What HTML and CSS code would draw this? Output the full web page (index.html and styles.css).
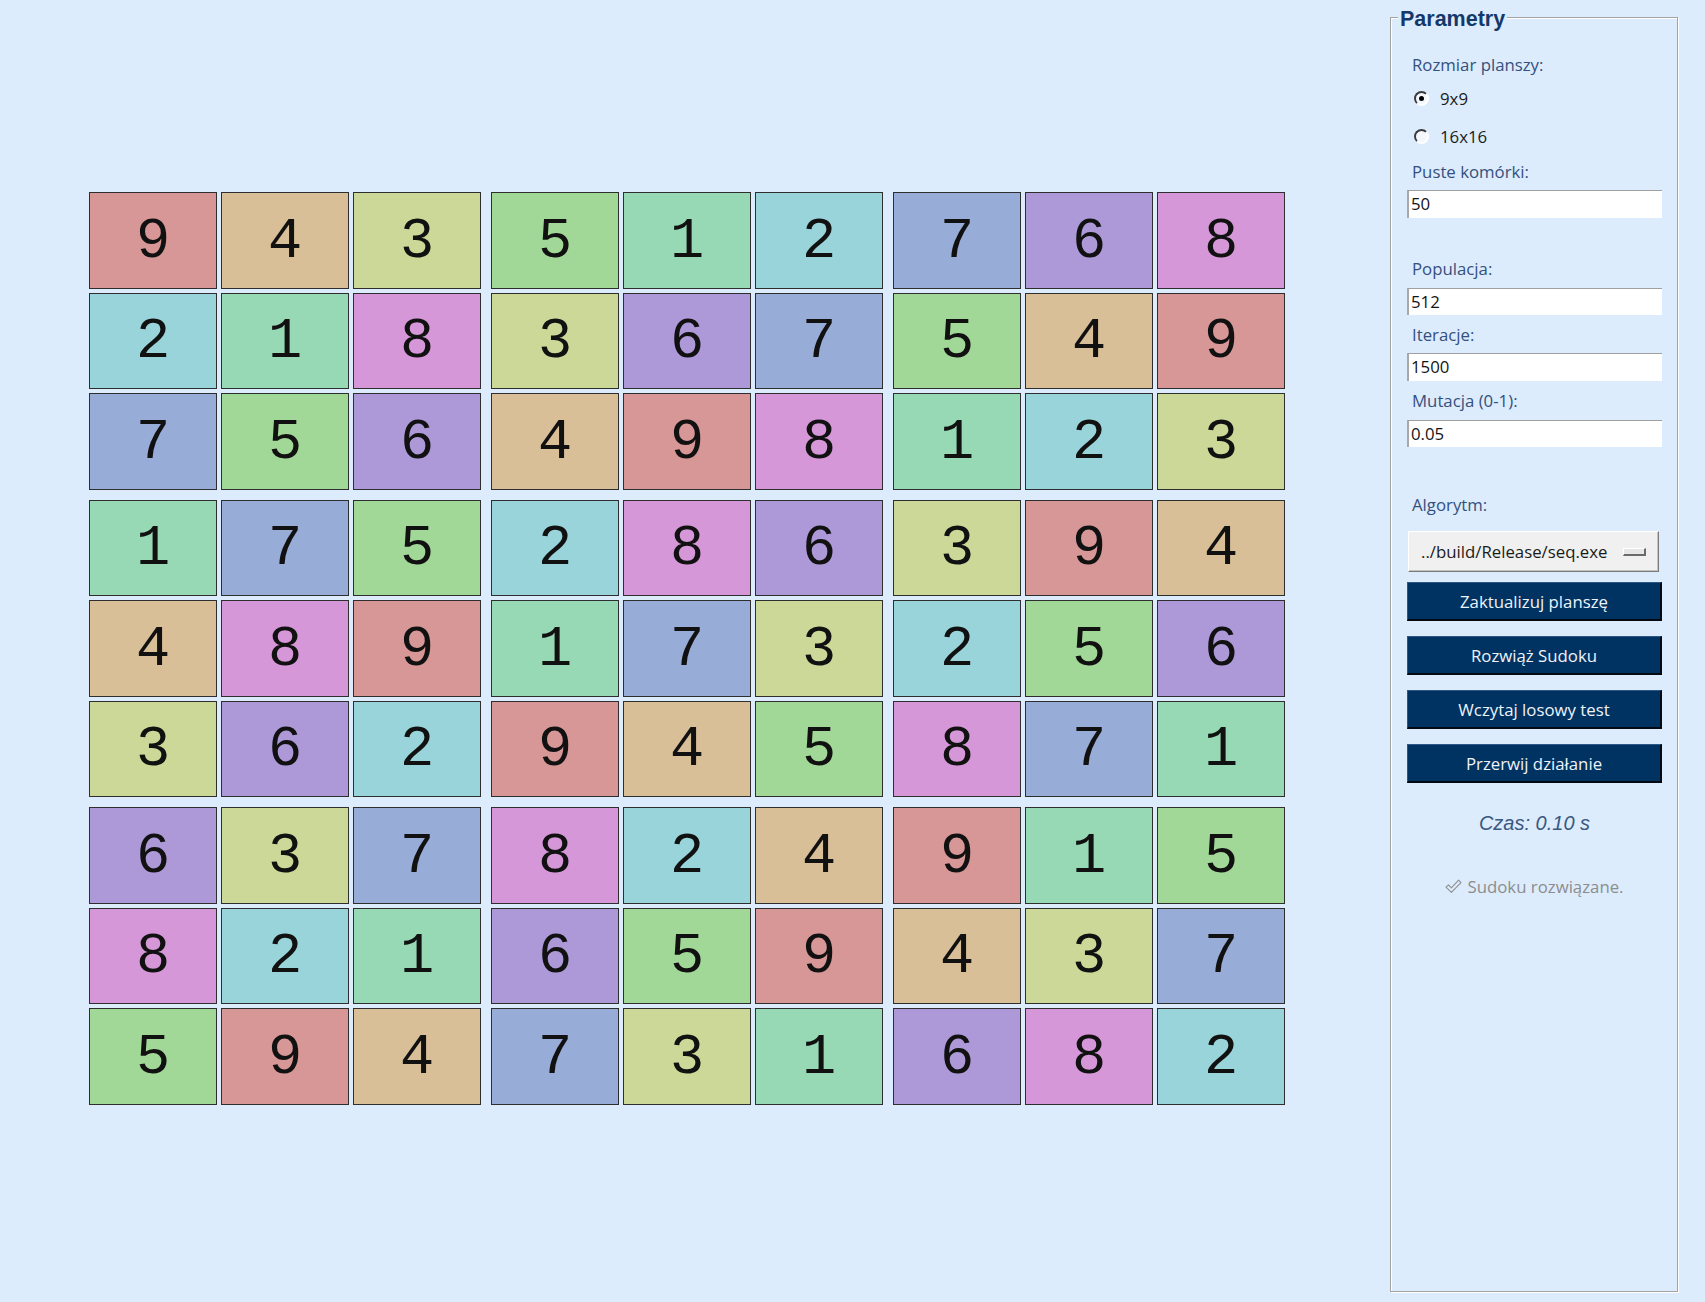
FILE: index.html
```html
<!DOCTYPE html>
<html lang="pl">
<head>
<meta charset="utf-8">
<title>Sudoku</title>
<link rel="stylesheet" href="styles.css">
</head>
<body>
<div class="app">
  <div class="board-area">
    <div class="board">
      <div class="block">
        <div class="cell d9">9</div><div class="cell d4">4</div><div class="cell d3">3</div>
        <div class="cell d2">2</div><div class="cell d1">1</div><div class="cell d8">8</div>
        <div class="cell d7">7</div><div class="cell d5">5</div><div class="cell d6">6</div>
      </div>
      <div class="block">
        <div class="cell d5">5</div><div class="cell d1">1</div><div class="cell d2">2</div>
        <div class="cell d3">3</div><div class="cell d6">6</div><div class="cell d7">7</div>
        <div class="cell d4">4</div><div class="cell d9">9</div><div class="cell d8">8</div>
      </div>
      <div class="block">
        <div class="cell d7">7</div><div class="cell d6">6</div><div class="cell d8">8</div>
        <div class="cell d5">5</div><div class="cell d4">4</div><div class="cell d9">9</div>
        <div class="cell d1">1</div><div class="cell d2">2</div><div class="cell d3">3</div>
      </div>
      <div class="block">
        <div class="cell d1">1</div><div class="cell d7">7</div><div class="cell d5">5</div>
        <div class="cell d4">4</div><div class="cell d8">8</div><div class="cell d9">9</div>
        <div class="cell d3">3</div><div class="cell d6">6</div><div class="cell d2">2</div>
      </div>
      <div class="block">
        <div class="cell d2">2</div><div class="cell d8">8</div><div class="cell d6">6</div>
        <div class="cell d1">1</div><div class="cell d7">7</div><div class="cell d3">3</div>
        <div class="cell d9">9</div><div class="cell d4">4</div><div class="cell d5">5</div>
      </div>
      <div class="block">
        <div class="cell d3">3</div><div class="cell d9">9</div><div class="cell d4">4</div>
        <div class="cell d2">2</div><div class="cell d5">5</div><div class="cell d6">6</div>
        <div class="cell d8">8</div><div class="cell d7">7</div><div class="cell d1">1</div>
      </div>
      <div class="block">
        <div class="cell d6">6</div><div class="cell d3">3</div><div class="cell d7">7</div>
        <div class="cell d8">8</div><div class="cell d2">2</div><div class="cell d1">1</div>
        <div class="cell d5">5</div><div class="cell d9">9</div><div class="cell d4">4</div>
      </div>
      <div class="block">
        <div class="cell d8">8</div><div class="cell d2">2</div><div class="cell d4">4</div>
        <div class="cell d6">6</div><div class="cell d5">5</div><div class="cell d9">9</div>
        <div class="cell d7">7</div><div class="cell d3">3</div><div class="cell d1">1</div>
      </div>
      <div class="block">
        <div class="cell d9">9</div><div class="cell d1">1</div><div class="cell d5">5</div>
        <div class="cell d4">4</div><div class="cell d3">3</div><div class="cell d7">7</div>
        <div class="cell d6">6</div><div class="cell d8">8</div><div class="cell d2">2</div>
      </div>
    </div>
  </div>

  <div class="sidebar">
    <fieldset class="frame">
      <legend class="frame-title">Parametry</legend>
      <div class="params">
        <div class="lbl lbl-first">Rozmiar planszy:</div>
        <label class="radio-row radio-first"><span class="radio checked"></span><span>9x9</span></label>
        <label class="radio-row radio-second"><span class="radio"></span><span>16x16</span></label>
        <div class="lbl lbl-empty">Puste komórki:</div>
        <div class="entry entry-a">50</div>
        <div class="lbl lbl-pop">Populacja:</div>
        <div class="entry entry-b">512</div>
        <div class="lbl lbl-tight">Iteracje:</div>
        <div class="entry entry-c">1500</div>
        <div class="lbl lbl-tight">Mutacja (0-1):</div>
        <div class="entry entry-b">0.05</div>
        <div class="lbl lbl-algo">Algorytm:</div>
        <div class="dropdown"><span>../build/Release/seq.exe</span><span class="indicator"></span></div>
        <div class="btn btn-first">Zaktualizuj planszę</div>
        <div class="btn">Rozwiąż Sudoku</div>
        <div class="btn">Wczytaj losowy test</div>
        <div class="btn">Przerwij działanie</div>
        <div class="time">Czas: 0.10 s</div>
        <div class="status">
          <svg class="check" width="17" height="15" viewBox="0 0 17 15"><path d="M1 8.2 L3.4 5.8 L6.4 8.8 L13.6 1.2 L16 3.6 L6.4 13.4 Z" fill="none" stroke="#8f8f8f" stroke-width="1.1" stroke-linejoin="round"/></svg>
          <span>Sudoku rozwiązane.</span>
        </div>
      </div>
    </fieldset>
  </div>
</div>
</body>
</html>
```

FILE: styles.css
```css
* { box-sizing: border-box; }

html, body {
  margin: 0;
  padding: 0;
  background: #dcecfd;
}

.app {
  display: flex;
  width: 1705px;
  height: 1302px;
}

.board-area {
  flex: 1;
  padding: 192px 0 0 89px;
}

.board {
  display: grid;
  grid-template-columns: repeat(3, 392px);
  grid-template-rows: repeat(3, 297.5px);
  gap: 10px;
}

.block {
  display: grid;
  grid-template-columns: repeat(3, 128px);
  grid-template-rows: repeat(3, 96.5px);
  gap: 4px;
}

.cell {
  border: 1px solid #2e2e2e;
  display: flex;
  align-items: center;
  justify-content: center;
  font-family: "Liberation Mono", "Courier New", monospace;
  font-size: 57px;
  line-height: 1;
  color: #111;
  padding-top: 4px;
}

.d1 { background: #97d9b5; }
.d2 { background: #99d4da; }
.d3 { background: #cbd898; }
.d4 { background: #d8bf97; }
.d5 { background: #a2d897; }
.d6 { background: #ad98d8; }
.d7 { background: #98acd8; }
.d8 { background: #d597d8; }
.d9 { background: #d89797; }

.sidebar {
  width: 315px;
  padding: 5px 27px 10px 0;
  display: flex;
  flex-direction: column;
}

.frame {
  flex: 1;
  margin: 0;
  padding: 0;
  border: 1px solid #a3a3a3;
  box-shadow: inset 1px 1px 0 #ffffff, 1px 1px 0 #ffffff;
  min-width: 0;
}

.frame-title {
  margin-left: 7px;
  padding: 4px 2px 0 2px;
  background: #dcecfd;
  font-family: "Liberation Sans", Arial, sans-serif;
  font-weight: bold;
  font-size: 21.5px;
  line-height: 20px;
  color: #15386a;
}

.params {
  padding: 24px 15px 0 16px;
  display: flex;
  flex-direction: column;
  font-family: "Open Sans", "Noto Sans", sans-serif;
  font-size: 16.8px;
}

.lbl {
  height: 24px;
  line-height: 24px;
  padding-left: 5px;
  color: #34507e;
}

.lbl-first { margin-top: 0; }
.lbl-empty { margin-top: 12px; }
.lbl-pop { margin-top: 39px; }
.lbl-tight { margin-top: 8px; }
.lbl-algo { margin-top: 46px; }

.radio-row {
  display: flex;
  align-items: center;
  gap: 11px;
  height: 24px;
  padding-left: 7px;
  color: #1b1b1b;
}

.radio-first { margin-top: 9px; }
.radio-second { margin-top: 14px; }

.radio {
  width: 15px;
  height: 15px;
  border-radius: 50%;
  border: 2px solid;
  border-color: #3c3c3c #ffffff #ffffff #3c3c3c;
  background: #f4f8fc;
  display: flex;
  align-items: center;
  justify-content: center;
}

.radio.checked::after {
  content: "";
  width: 5px;
  height: 5px;
  border-radius: 50%;
  background: #000;
}

.entry {
  height: 28px;
  line-height: 25px;
  padding-left: 2px;
  background: #ffffff;
  border-style: solid;
  border-width: 1px 0 0 2px;
  border-color: #a0a0a0 #ffffff #ffffff #a8a8a8;
  color: #141414;
}

.entry-a { margin-top: 6px; }
.entry-b { margin-top: 7px; height: 27px; }
.entry-c { margin-top: 6px; }

.dropdown {
  margin: 14px 3px 0 1px;
  height: 41px;
  background: #f0f0f0;
  border: 1px solid;
  border-color: #ffffff #7a7a7a #7a7a7a #ffffff;
  box-shadow: inset -1px -1px 0 #c4c4c4;
  display: flex;
  align-items: center;
  justify-content: space-between;
  padding: 0 12px 0 12px;
  color: #1a1a1a;
}

.indicator {
  flex: 0 0 23px;
  height: 8px;
  background: #e6e6e6;
  border: 1px solid;
  border-width: 1px 2px 2px 1px;
  border-color: #ffffff #6a6a6a #6a6a6a #ffffff;
}

.btn {
  margin-top: 15px;
  height: 39px;
  background: #003262;
  border: 1px solid;
  border-width: 1px 2px 2px 1px;
  border-color: #2d5785 #050a12 #050a12 #2d5785;
  color: #eef3f9;
  display: flex;
  align-items: center;
  justify-content: center;
}

.btn-first { margin-top: 10px; }

.time {
  margin-top: 28px;
  height: 24px;
  line-height: 24px;
  text-align: center;
  font-family: "Liberation Sans", Arial, sans-serif;
  font-style: italic;
  font-size: 20px;
  color: #3a5880;
}

.status {
  margin-top: 39px;
  height: 24px;
  display: flex;
  align-items: center;
  justify-content: center;
  gap: 5px;
  color: #8d8d8d;
}
```
